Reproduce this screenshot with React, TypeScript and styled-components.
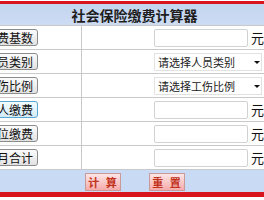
import React from "react";
import styled, { createGlobalStyle, css } from "styled-components";

const Global = createGlobalStyle`
  html, body { margin: 0; padding: 0; background: #ffffff; }
  body { font-family: "Noto Sans CJK SC", "Noto Sans", sans-serif; }
`;

const Viewport = styled.div`
  width: 264px;
  height: 200px;
  overflow: hidden;
  padding-top: 1px;
  box-sizing: border-box;
  background: #fff;
`;

const Calc = styled.div`
  width: 317px;
  margin-left: -24px;
  border-top: 3px solid #d8141c;
  border-bottom: 5px solid #d8141c;
`;

const TitleBar = styled.div`
  height: 21px;
  background: linear-gradient(#c3d5ef, #cddcf3);
  display: flex;
  align-items: center;
  justify-content: center;
  font-size: 14px;
  font-weight: 700;
  color: #1e1e1e;
  line-height: 1;
`;

const Row = styled.div`
  display: grid;
  grid-template-columns: 106px 1fr;
  height: 24px;
  box-sizing: border-box;
  border-top: 1px solid #c9c9c9;
`;

const LabelCell = styled.div`
  display: flex;
  align-items: center;
  padding-left: 4px;
  border-right: 1px solid #c9c9c9;
`;

const ValueCell = styled.div`
  display: flex;
  align-items: center;
  padding-left: 72px;
`;

const LabelButton = styled.button<{ $active?: boolean }>`
  width: 58px;
  height: 17px;
  padding: 0;
  box-sizing: border-box;
  border: 1px solid #8c8c8c;
  border-radius: 3px;
  background: linear-gradient(#fbfbfb, #e2e2e2);
  font-family: "Noto Sans CJK SC", sans-serif;
  font-size: 12px;
  line-height: 1;
  color: #111;
  display: flex;
  align-items: center;
  justify-content: center;
  ${(p) =>
    p.$active &&
    css`
      border-color: #5aa7d6;
      background: linear-gradient(#f2fbff, #d4ecf8);
    `}
`;

const TextInput = styled.input`
  width: 94px;
  height: 18px;
  box-sizing: border-box;
  border: 1px solid #d2d2d2;
  border-radius: 2px;
  padding: 0 2px;
  font-size: 12px;
  outline: none;
`;

const Unit = styled.span`
  margin-left: 3px;
  font-size: 13px;
  color: #111;
  line-height: 1;
`;

const SelectWrap = styled.div`
  position: relative;
  width: 108px;
  height: 18px;
`;

const Select = styled.select`
  appearance: none;
  -webkit-appearance: none;
  display: block;
  width: 100%;
  height: 18px;
  box-sizing: border-box;
  border: 1px solid #e2e2e2;
  border-radius: 0;
  background: #fff;
  margin: 0;
  padding: 0 0 0 3px;
  font-family: "Noto Sans CJK SC", sans-serif;
  font-size: 11px;
  line-height: 16px;
  color: #222;
  outline: none;
`;

const Arrow = styled.span`
  position: absolute;
  right: 2px;
  top: 8px;
  width: 0;
  height: 0;
  border-left: 3px solid transparent;
  border-right: 3px solid transparent;
  border-top: 3px solid #111;
  pointer-events: none;
`;

const Footer = styled.div`
  height: 23px;
  box-sizing: border-box;
  border-top: 1px solid #c9c9c9;
  background: #c8daf4;
  display: flex;
  align-items: center;
  justify-content: center;
  gap: 28px;
  padding-top: 2px;
`;

const ActionButton = styled.button`
  width: 36px;
  height: 18px;
  padding: 0 0 0 2px;
  box-sizing: border-box;
  border: 1px solid #c99a9a;
  background: linear-gradient(#fde6e6, #f6aaaa);
  font-family: "Noto Sans CJK SC", sans-serif;
  font-size: 11px;
  font-weight: 700;
  letter-spacing: 2px;
  color: #c2331b;
  line-height: 1;
  white-space: pre;
  display: flex;
  align-items: center;
  justify-content: center;
`;

type Field =
  | { label: string; kind: "input"; active?: boolean }
  | { label: string; kind: "select"; placeholder: string; active?: boolean };

const fields: Field[] = [
  { label: "缴费基数", kind: "input" },
  { label: "人员类别", kind: "select", placeholder: "请选择人员类别" },
  { label: "工伤比例", kind: "select", placeholder: "请选择工伤比例" },
  { label: "个人缴费", kind: "input", active: true },
  { label: "单位缴费", kind: "input" },
  { label: "每月合计", kind: "input" },
];

export default function App() {
  return (
    <>
      <Global />
      <Viewport>
        <Calc>
          <TitleBar>社会保险缴费计算器</TitleBar>
          {fields.map((f) => (
            <Row key={f.label}>
              <LabelCell>
                <LabelButton $active={f.active}>{f.label}</LabelButton>
              </LabelCell>
              <ValueCell>
                {f.kind === "input" ? (
                  <>
                    <TextInput type="text" />
                    <Unit>元</Unit>
                  </>
                ) : (
                  <SelectWrap>
                    <Select defaultValue="">
                      <option value="">{f.placeholder}</option>
                    </Select>
                    <Arrow />
                  </SelectWrap>
                )}
              </ValueCell>
            </Row>
          ))}
          <Footer>
            <ActionButton>计 算</ActionButton>
            <ActionButton>重 置</ActionButton>
          </Footer>
        </Calc>
      </Viewport>
    </>
  );
}
